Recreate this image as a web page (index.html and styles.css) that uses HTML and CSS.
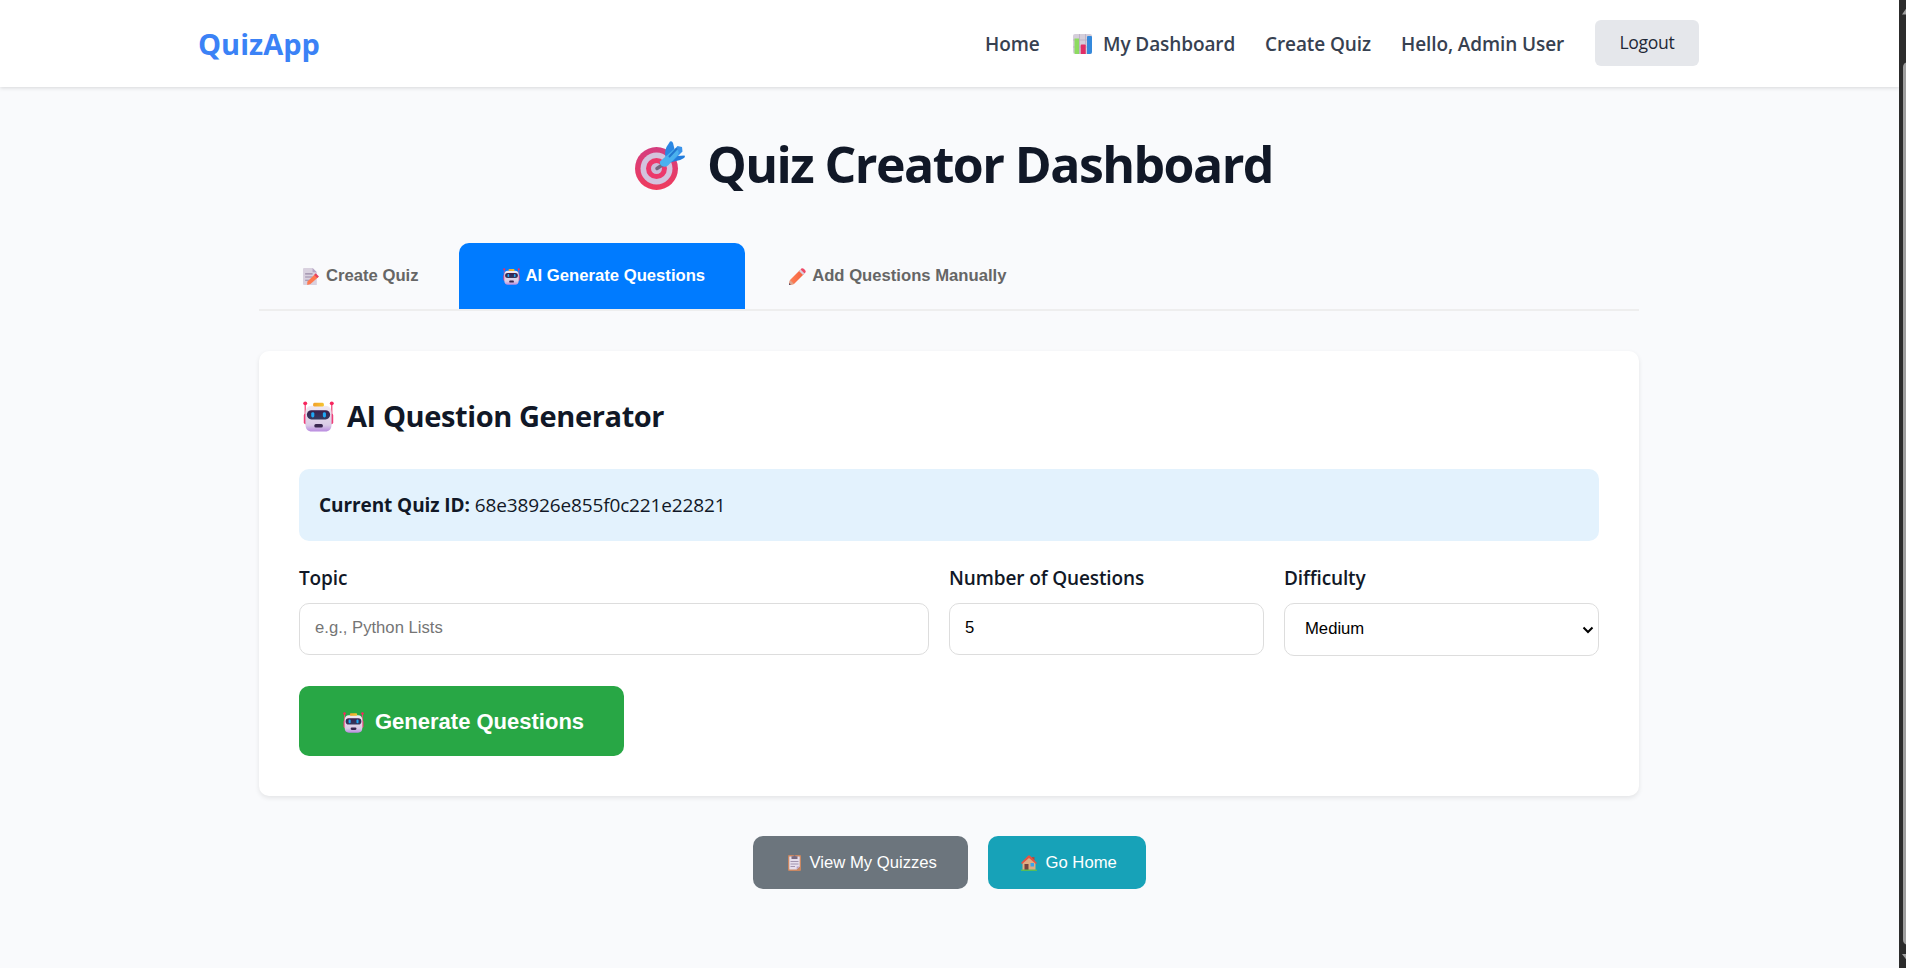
FILE: index.html
```html
<!DOCTYPE html>
<html lang="en">
<head>
<meta charset="utf-8">
<title>QuizApp</title>
<link rel="stylesheet" href="styles.css">
</head>
<body>
<svg class="defs" width="0" height="0" aria-hidden="true">
  <defs>
    <linearGradient id="face" x1="0" y1="0" x2="0" y2="1"><stop offset="0" stop-color="#f0e9f2"/><stop offset=".75" stop-color="#d9cbe6"/><stop offset="1" stop-color="#b98ae0"/></linearGradient>
    <linearGradient id="visor" x1="0" y1="0" x2="0" y2="1"><stop offset="0" stop-color="#3a1f4d"/><stop offset="1" stop-color="#353a60"/></linearGradient>
    <linearGradient id="gold" x1="0" y1="0" x2="1" y2="0"><stop offset="0" stop-color="#f2a02c"/><stop offset="1" stop-color="#f4c531"/></linearGradient>
    <linearGradient id="ring" x1="0" y1="0" x2="0" y2="1"><stop offset="0" stop-color="#d43d80"/><stop offset="1" stop-color="#ef3b5c"/></linearGradient>
    <linearGradient id="wood" x1="0" y1="0" x2="1" y2="0"><stop offset="0" stop-color="#ff8257"/><stop offset="1" stop-color="#f4603f"/></linearGradient>
    <symbol id="robot" viewBox="0 0 32 32">
      <path d="M2.300 3v18M29.700 3v18" stroke="#f1497b" stroke-width="1.300"/>
      <circle cx="2.300" cy="2.400" r="2" fill="#f7265e"/><circle cx="29.700" cy="2.400" r="2" fill="#f7265e"/>
      <rect x=".8" y="13" width="30.400" height="11" rx="2" fill="#ee3f78"/>
      <path d="M9 5h14c4 0 6.500 3 6.500 7v12c0 5-2.500 7.500-6.500 7.500H9c-4 0-6.500-2.500-6.500-7.500V12c0-4 2.500-7 6.500-7z" fill="url(#face)"/>
      <rect x="10.500" y="1.800" width="11" height="4" rx="1.500" fill="url(#gold)"/>
      <rect x="4" y="9.500" width="24" height="9.500" rx="4.700" fill="url(#visor)"/>
      <rect x="8.500" y="11.500" width="3.200" height="5.500" rx="1.500" fill="#1fa8f5"/><rect x="20.500" y="11.500" width="3.200" height="5.500" rx="1.500" fill="#1fa8f5"/>
      <rect x="11.700" y="23.700" width="8.800" height="3.600" rx="1.600" fill="#39274f"/>
    </symbol>
    <symbol id="target" viewBox="0 0 50 49">
      <circle cx="21.500" cy="27.500" r="21.500" fill="url(#ring)"/><circle cx="21.500" cy="27.500" r="16" fill="#d3c3dd"/>
      <circle cx="21.500" cy="27.500" r="10.500" fill="#ec386b"/><circle cx="21.500" cy="27.500" r="5.500" fill="#cbbbd8"/>
      <path d="M22 27.500l6-4" stroke="#746780" stroke-width="3.500" stroke-linecap="round"/>
      <path d="M31 18q-2-7 .5-12L35 .5q2-1 3 1.500l1.500 6z" fill="#2b87e3"/>
      <path d="M33 22l9-7 7.500-.5q1 1-.5 2.500-4 3-10 3.500z" fill="#237ddd"/>
      <path d="M33 15L42.500 5l4.500 1 .5 4.500-10 10z" fill="#3a93ea"/>
      <path d="M25 20.500L38 9c4-2 7 1 5 5L33 24.500c-4 3-9 0-8-4z" fill="#4ab1ee"/><path d="M34.500 15.500l7-7.500" stroke="#2377cf" stroke-width="2" stroke-linecap="round"/>
    </symbol>
    <symbol id="chart" viewBox="0 0 19 20">
      <rect width="19" height="20" rx="2" fill="#d5ceda"/><path d="M0 6h19M0 13h19M6.500 0v20M12.500 0v20" stroke="#b9aec2" stroke-width=".8"/>
      <path d="M1.500 4.500h4.500V20H2.500a1 1 0 0 1-1-1z" fill="#8ddb61"/><path d="M7.700 11.500q0-1 1-1h3q1 0 1 1V20h-5z" fill="#e12e66"/><path d="M14 3q0-1 1-1h3q1 0 1 1v15q0 2-2 2h-3z" fill="#3489dc"/>
    </symbol>
    <symbol id="memo" viewBox="0 0 16 16">
      <path d="M1 0h8l4 4v12H1q-1 0-1-1V1q0-1 1-1z" fill="#d9d1df"/><path d="M9 0v4h4z" fill="#b5a5c4"/>
      <path d="M2 5.500h7M2 8.500h7M2 11.500h5" stroke="#998aa7"/>
      <path d="M4 13l7-7 3 3-7 6-3 1z" fill="#ff7950"/><path d="M10.500 6.500L12 5l3 3-1.500 1.500z" fill="#e6425e"/>
    </symbol>
    <symbol id="pencil" viewBox="0 0 17 17">
      <path d="M1 12L11 2l4 4L5 16l-4 1q-1 0-1-1z" fill="url(#wood)"/><path d="M1 12l4 4-4 1q-1 0-1-1z" fill="#dca48d"/><path d="M.2 15l1.600 1.700L0 17z" fill="#55415c"/>
      <path d="M10 3l1.500-1.500 4 4L14 7z" fill="#d8cddd"/><path d="M11.500 1.500q1.500-2 3.500-.5l1 1q1.500 1.500-.5 3.500z" fill="#ee4a68"/>
    </symbol>
    <symbol id="clip" viewBox="0 0 13 16">
      <rect width="13" height="16" rx="1.200" fill="#c98762"/><path d="M1.300 1.500h10.400v10l-3 3H1.300z" fill="#e6deed"/><path d="M11.700 11.500l-3 3v-3z" fill="#b7a0c7"/>
      <path d="M3.500 3V1.300h1.800Q6.500-.6 7.700 1.300h1.800V4h-6z" fill="#776a80"/><path d="M2.500 6.500h8M2.500 9h8M2.500 11.500h4.500" stroke="#9a8ba9" stroke-width=".9"/>
    </symbol>
    <symbol id="house" viewBox="0 0 16 16">
      <path d="M11 2h2.500v5H11z" fill="#a84f43"/><path d="M1.500 7L8 1l6.500 6v8h-13z" fill="#dfac83"/><path d="M0 8L7 .8q1-1 2 0L16 8l-1 1-7-6-7 6z" fill="#e65343"/>
      <rect x="3.500" y="9" width="4" height="6" fill="#75453f"/><rect x="9.500" y="8" width="3.500" height="3.500" fill="#3aa5ec"/><path d="M0 14.500h16V16H0z" fill="#57bd58"/>
    </symbol>
  </defs>
</svg>
<div class="window">
  <div class="page">
    <header class="header">
      <div class="header-inner">
        <a class="logo">QuizApp</a>
        <nav class="nav">
          <a class="nav-home">Home</a>
          <a class="nav-dash"><svg class="ic-chart"><use href="#chart"/></svg>My Dashboard</a>
          <a class="nav-create">Create Quiz</a>
          <a class="nav-user">Hello, Admin User</a>
          <button class="logout">Logout</button>
        </nav>
      </div>
    </header>
    <main class="main">
      <h1 class="title"><svg class="ic-target"><use href="#target"/></svg><span>Quiz Creator Dashboard</span></h1>
      <div class="tabs">
        <button class="tab"><svg class="ic-tab"><use href="#memo"/></svg><span>Create Quiz</span></button>
        <button class="tab active"><svg class="ic-tab"><use href="#robot"/></svg><span>AI Generate Questions</span></button>
        <button class="tab"><svg class="ic-tab"><use href="#pencil"/></svg><span>Add Questions Manually</span></button>
      </div>
      <section class="card">
        <h2 class="card-title"><svg class="ic-robot"><use href="#robot"/></svg><span>AI Question Generator</span></h2>
        <div class="info"><strong>Current Quiz ID:</strong><span class="quiz-id">68e38926e855f0c221e22821</span></div>
        <div class="fields">
          <div class="field"><label class="label">Topic</label><input class="input" placeholder="e.g., Python Lists"></div>
          <div class="field"><label class="label">Number of Questions</label><input class="input" value="5"></div>
          <div class="field"><label class="label">Difficulty</label>
            <div class="select"><span>Medium</span><svg class="chevron" viewBox="0 0 12 8"><path d="M1.500 1.500L6 6l4.500-4.500" fill="none" stroke="#000" stroke-width="2"/></svg></div></div>
        </div>
        <button class="generate"><svg class="ic-gen"><use href="#robot"/></svg><span>Generate Questions</span></button>
      </section>
      <div class="actions">
        <button class="action view"><svg class="ic-clip"><use href="#clip"/></svg><span>View My Quizzes</span></button>
        <button class="action home"><svg class="ic-house"><use href="#house"/></svg><span>Go Home</span></button>
      </div>
    </main>
  </div>
  <div class="scrollbar"><svg width="7" height="968"><path d="M3 14.500L7.500 8v6.500zM3 954h4.500v6z" fill="#9f9f9f"/><rect x="4" y="62" width="15" height="883" rx="5" fill="#9f9f9f"/></svg></div>
</div>
</body>
</html>
```
FILE: styles.css
```css
* { box-sizing: border-box; }
body { margin: 0; overflow: hidden; background: #f9fafc; color: #111827; font-family: "Segoe UI", "Open Sans", "Noto Sans", sans-serif; }
button, input { font-family: "Liberation Sans", Arial, sans-serif; border: 0; margin: 0; }
span, strong, .nav a, .label { white-space: nowrap; }
svg { flex: none; overflow: visible; }
.defs { display: block; }
.window { display: flex; height: 968px; }
.page { width: 1899px; }
.scrollbar { width: 7px; background: #2c2c2c; overflow: hidden; }
.scrollbar svg { display: block; overflow: hidden; }
.header { height: 87px; padding-right: 1px; background: #fff; box-shadow: 0 1px 4px rgba(0, 0, 0, .14); }
.header-inner { width: 1500px; height: 87px; margin: 0 auto; display: flex; justify-content: space-between; }
.logo { margin-left: -1px; color: #3b82f6; font-size: 29px; font-weight: 700; line-height: 40px; padding-top: 24px; }
.nav { display: flex; gap: 30px; color: #374151; font-size: 19px; font-weight: 600; line-height: 28px; padding-top: 30px; letter-spacing: -.1px; }
.nav a { display: flex; }
.nav-home { width: 55px; }
.nav-dash { width: 165px; }
.nav-create { width: 106px; }
.nav-user { width: 164px; }
.ic-chart { width: 19px; height: 20px; margin: 4px 11px 0 3px; }
.logout { width: 104px; height: 46px; margin-top: -10px; padding: 0 0 2px; border-radius: 6px; background: #e5e7eb; color: #1f2937; font-family: "Segoe UI", "Open Sans", sans-serif; font-size: 17.600px; letter-spacing: -.3px; }
.main { width: 1381px; margin: 0 auto; padding-right: 1px; }
.title { display: flex; padding-left: 376px; margin: 0; height: 156px; padding-top: 42px; font-size: 50px; font-weight: 700; line-height: 70px; letter-spacing: -1.550px; }
.ic-target { width: 50px; height: 49px; margin: 12px 22px 0 0; }
.tabs { display: flex; height: 68px; border-bottom: 2px solid #eee; }
.tab { display: flex; align-items: center; height: 66px; padding: 0 40px; background: transparent; color: #666; font-size: 16.670px; font-weight: 700; }
.tab.active { background: #007bff; color: #fff; border-radius: 10px 10px 0 0; }
.ic-tab { width: 17px; height: 17px; margin: 0 6px 0 4px; }
.card { height: 445px; margin-top: 40px; padding: 40px; background: #fff; border-radius: 10px; box-shadow: 0 2px 5px rgba(0, 0, 0, .09); }
.card-title { display: flex; margin: 0; height: 78px; font-size: 29px; font-weight: 700; line-height: 50px; letter-spacing: -.4px; }
.ic-robot { width: 31px; height: 31px; margin: 10px 13px 0 4px; }
.info { height: 72px; padding: 0 20px; display: flex; align-items: center; gap: 5px; border-radius: 10px; background: #e3f2fd; font-size: 19px; letter-spacing: -.080px; }
.quiz-id { letter-spacing: -.140px; }
.fields { display: grid; grid-template-columns: 2fr 1fr 1fr; gap: 20px; margin-top: 23px; }
.label { display: block; height: 39px; font-size: 19px; font-weight: 600; line-height: 28px; letter-spacing: -.120px; }
.input { display: block; width: 100%; height: 52px; border: 1px solid #ddd; border-radius: 10px; padding: 0 15px 2px; font-size: 16.670px; background: #fff; color: #000; }
.input::placeholder { color: #757575; }
.select { display: flex; align-items: center; justify-content: space-between; height: 53px; border: 1px solid #ddd; border-radius: 10px; padding: 0 4px 0 20px; font-family: "Liberation Sans", Arial, sans-serif; font-size: 16.670px; color: #000; }
.select span { padding-bottom: 1px; }
.chevron { width: 12px; height: 8px; }
.generate { display: flex; align-items: center; width: 325px; height: 70px; margin-top: 30px; padding: 2px 0 0 44px; border-radius: 10px; background: #28a745; color: #fff; font-size: 22px; font-weight: 700; }
.ic-gen { width: 21px; height: 21px; margin-right: 11px; }
.actions { display: flex; justify-content: center; gap: 20px; margin-top: 40px; }
.action { display: flex; align-items: center; height: 53px; border-radius: 10px; padding: 0; color: #fff; font-size: 16.670px; }
.view { width: 215px; background: #6c757d; }
.home { width: 158px; background: #17a2b8; }
.ic-clip { width: 13px; height: 16px; margin: 0 9px 0 35px; }
.ic-house { width: 16px; height: 16px; margin: 0 9px 0 33px; }
```
